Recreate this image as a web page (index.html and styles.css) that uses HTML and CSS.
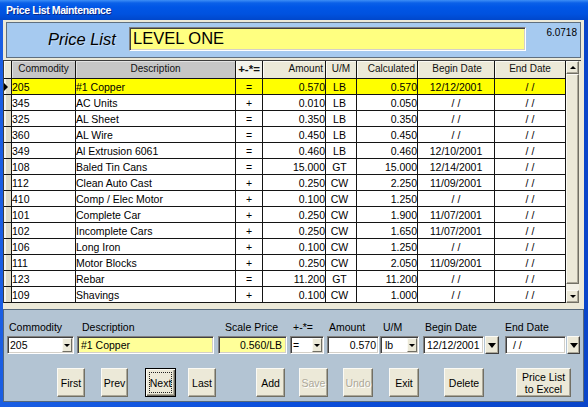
FILE: index.html
```html
<!DOCTYPE html>
<html>
<head>
<meta charset="utf-8">
<title>Price List Maintenance</title>
<link rel="stylesheet" href="styles.css">
</head>
<body>
<div class="window">
  <div class="titlebar">Price List Maintenance</div>
  <div class="client">
    <div class="list-panel">
      <span class="list-label">Price List</span>
      <div class="list-input">LEVEL ONE</div>
      <span class="version">6.0718</span>
    </div>

    <div class="grid">
      <div class="grid-body">
        <div class="row row-head">
          <div class="c c-sel"></div>
          <div class="c c-com h-gray">Commodity</div>
          <div class="c c-desc h-gray">Description</div>
          <div class="c c-sign h-sign">+-*=</div>
          <div class="c c-amt">Amount</div>
          <div class="c c-um">U/M</div>
          <div class="c c-calc">Calculated</div>
          <div class="c c-beg">Begin Date</div>
          <div class="c c-end">End Date</div>
        </div>
        <div class="row row-current">
          <div class="c c-sel"><span class="pointer"></span></div>
          <div class="c c-com">205</div><div class="c c-desc">#1 Copper</div><div class="c c-sign">=</div><div class="c c-amt">0.570</div><div class="c c-um">LB</div><div class="c c-calc">0.570</div><div class="c c-beg">12/12/2001</div><div class="c c-end">/ /</div>
        </div>
        <div class="row">
          <div class="c c-sel"></div>
          <div class="c c-com">345</div><div class="c c-desc">AC Units</div><div class="c c-sign">+</div><div class="c c-amt">0.010</div><div class="c c-um">LB</div><div class="c c-calc">0.050</div><div class="c c-beg">/ /</div><div class="c c-end">/ /</div>
        </div>
        <div class="row">
          <div class="c c-sel"></div>
          <div class="c c-com">325</div><div class="c c-desc">AL Sheet</div><div class="c c-sign">=</div><div class="c c-amt">0.350</div><div class="c c-um">LB</div><div class="c c-calc">0.350</div><div class="c c-beg">/ /</div><div class="c c-end">/ /</div>
        </div>
        <div class="row">
          <div class="c c-sel"></div>
          <div class="c c-com">360</div><div class="c c-desc">AL Wire</div><div class="c c-sign">=</div><div class="c c-amt">0.450</div><div class="c c-um">LB</div><div class="c c-calc">0.450</div><div class="c c-beg">/ /</div><div class="c c-end">/ /</div>
        </div>
        <div class="row">
          <div class="c c-sel"></div>
          <div class="c c-com">349</div><div class="c c-desc">Al Extrusion 6061</div><div class="c c-sign">=</div><div class="c c-amt">0.460</div><div class="c c-um">LB</div><div class="c c-calc">0.460</div><div class="c c-beg">12/10/2001</div><div class="c c-end">/ /</div>
        </div>
        <div class="row">
          <div class="c c-sel"></div>
          <div class="c c-com">108</div><div class="c c-desc">Baled Tin Cans</div><div class="c c-sign">=</div><div class="c c-amt">15.000</div><div class="c c-um">GT</div><div class="c c-calc">15.000</div><div class="c c-beg">12/14/2001</div><div class="c c-end">/ /</div>
        </div>
        <div class="row">
          <div class="c c-sel"></div>
          <div class="c c-com">112</div><div class="c c-desc">Clean Auto Cast</div><div class="c c-sign">+</div><div class="c c-amt">0.250</div><div class="c c-um">CW</div><div class="c c-calc">2.250</div><div class="c c-beg">11/09/2001</div><div class="c c-end">/ /</div>
        </div>
        <div class="row">
          <div class="c c-sel"></div>
          <div class="c c-com">410</div><div class="c c-desc">Comp / Elec Motor</div><div class="c c-sign">+</div><div class="c c-amt">0.100</div><div class="c c-um">CW</div><div class="c c-calc">1.250</div><div class="c c-beg">/ /</div><div class="c c-end">/ /</div>
        </div>
        <div class="row">
          <div class="c c-sel"></div>
          <div class="c c-com">101</div><div class="c c-desc">Complete Car</div><div class="c c-sign">+</div><div class="c c-amt">0.250</div><div class="c c-um">CW</div><div class="c c-calc">1.900</div><div class="c c-beg">11/07/2001</div><div class="c c-end">/ /</div>
        </div>
        <div class="row">
          <div class="c c-sel"></div>
          <div class="c c-com">102</div><div class="c c-desc">Incomplete Cars</div><div class="c c-sign">+</div><div class="c c-amt">0.250</div><div class="c c-um">CW</div><div class="c c-calc">1.650</div><div class="c c-beg">11/07/2001</div><div class="c c-end">/ /</div>
        </div>
        <div class="row">
          <div class="c c-sel"></div>
          <div class="c c-com">106</div><div class="c c-desc">Long Iron</div><div class="c c-sign">+</div><div class="c c-amt">0.100</div><div class="c c-um">CW</div><div class="c c-calc">1.250</div><div class="c c-beg">/ /</div><div class="c c-end">/ /</div>
        </div>
        <div class="row">
          <div class="c c-sel"></div>
          <div class="c c-com">111</div><div class="c c-desc">Motor Blocks</div><div class="c c-sign">+</div><div class="c c-amt">0.250</div><div class="c c-um">CW</div><div class="c c-calc">2.050</div><div class="c c-beg">11/09/2001</div><div class="c c-end">/ /</div>
        </div>
        <div class="row">
          <div class="c c-sel"></div>
          <div class="c c-com">123</div><div class="c c-desc">Rebar</div><div class="c c-sign">=</div><div class="c c-amt">11.200</div><div class="c c-um">GT</div><div class="c c-calc">11.200</div><div class="c c-beg">/ /</div><div class="c c-end">/ /</div>
        </div>
        <div class="row">
          <div class="c c-sel"></div>
          <div class="c c-com">109</div><div class="c c-desc">Shavings</div><div class="c c-sign">+</div><div class="c c-amt">0.100</div><div class="c c-um">CW</div><div class="c c-calc">1.000</div><div class="c c-beg">/ /</div><div class="c c-end">/ /</div>
        </div>
      </div>
      <div class="vscroll">
        <div class="sb-btn"><span class="tri-up"></span></div>
        <div class="sb-thumb"></div>
        <div class="sb-track"></div>
        <div class="sb-btn"><span class="tri-down"></span></div>
      </div>
    </div>

    <div class="edit-panel">
      <div class="fields">
        <div class="field f-com">
          <div class="lbl">Commodity</div>
          <div class="ctl combo"><span class="val">205</span><span class="dd"><span class="tri-down"></span></span></div>
        </div>
        <div class="field f-desc">
          <div class="lbl">Description</div>
          <div class="ctl yellow"><span class="val">#1 Copper</span></div>
        </div>
        <div class="field f-scale">
          <div class="lbl">Scale Price</div>
          <div class="ctl yellow right"><span class="val">0.560/LB</span></div>
        </div>
        <div class="field f-sign">
          <div class="lbl">+-*=</div>
          <div class="ctl combo"><span class="val">=</span><span class="dd"><span class="tri-down"></span></span></div>
        </div>
        <div class="field f-amt">
          <div class="lbl">Amount</div>
          <div class="ctl right"><span class="val">0.570</span></div>
        </div>
        <div class="field f-um">
          <div class="lbl">U/M</div>
          <div class="ctl combo"><span class="val">lb</span><span class="dd"><span class="tri-down"></span></span></div>
        </div>
        <div class="field f-beg">
          <div class="lbl">Begin Date</div>
          <div class="date-row">
            <div class="ctl date"><span class="val">12/12/2001</span></div>
            <div class="date-btn"><span class="tri-big"></span></div>
          </div>
        </div>
        <div class="field f-end">
          <div class="lbl">End Date</div>
          <div class="date-row">
            <div class="ctl date"><span class="val">&nbsp;/ /</span></div>
            <div class="date-btn narrow"><span class="tri-big"></span></div>
          </div>
        </div>
      </div>
      <div class="buttons">
        <div class="btn b-first">First</div>
        <div class="btn b-prev">Prev</div>
        <div class="btn b-next"><span class="focus">Next</span></div>
        <div class="btn b-last">Last</div>
        <div class="btn b-add">Add</div>
        <div class="btn b-save disabled">Save</div>
        <div class="btn b-undo disabled">Undo</div>
        <div class="btn b-exit">Exit</div>
        <div class="btn b-delete">Delete</div>
        <div class="btn b-excel">Price List<br>to Excel</div>
      </div>
    </div>
  </div>
</div>
</body>
</html>
```

FILE: styles.css
```css
* { box-sizing: border-box; }
html, body { margin: 0; padding: 0; }
body {
  width: 588px;
  height: 407px;
  overflow: hidden;
  font-family: "Liberation Sans", Arial, sans-serif;
  font-size: 10.5px;
  color: #000;
  background: #0b4edb;
}

.window {
  width: 588px;
  height: 407px;
  display: flex;
  flex-direction: column;
  background: linear-gradient(to right, #1a5ee3, #0b4edb 50%, #0a45c9);
}

.titlebar {
  height: 20px;
  flex: none;
  padding-left: 6px;
  color: #fff;
  font-weight: bold;
  font-size: 10.5px;
  letter-spacing: -0.4px;
  line-height: 20px;
  background: linear-gradient(#3d8ef6 0, #0a60e8 3px, #0056e6 7px, #0052df 14px, #0047cb 20px);
  text-shadow: 1px 1px 0 #0a2a8a;
}

.client {
  flex: 1;
  margin: 0 4px 5px 3px;
  background: #ece9d8;
  display: flex;
  flex-direction: column;
}

/* ---- top panel ---- */
.list-panel {
  flex: none;
  height: 36px;
  margin: 2px 3px 0 3px;
  background: #a6caf0;
  border: 1px solid #5f6f7f;
  display: flex;
  align-items: center;
  padding-left: 41px;
  padding-right: 3px;
}
.list-label {
  font-size: 16.5px;
  font-style: italic;
  line-height: 20px;
  width: 70px;
  margin-right: 11px;
  margin-bottom: 2px;
  text-shadow: 1px 1px 0 rgba(255,255,255,0.35);
}
.list-input {
  width: 397px;
  height: 24px;
  margin-bottom: 2px;
  background: #ffff80;
  border: 1px solid;
  border-color: #808080 #fff #fff #808080;
  box-shadow: inset 1px 1px 0 #404040, inset -1px -1px 0 #d4d0c8;
  font-size: 16.5px;
  line-height: 21px;
  padding-left: 3px;
}
.version {
  margin-left: auto;
  align-self: flex-start;
  margin-top: 4px;
  font-size: 10px;
  line-height: 12px;
}

/* ---- grid ---- */
.grid {
  flex: none;
  height: 246px;
  margin: 2px 3px 0 0;
  border-top: 1px solid #3c3c3c;
  display: flex;
  align-items: flex-start;
}
.grid-body {
  border-left: 1px solid #3c3c3c;
}
.row {
  display: flex;
  height: 16px;
}
.c {
  height: 100%;
  border-right: 1px solid #141414;
  border-bottom: 1px solid #141414;
  background: #fff;
  white-space: nowrap;
  overflow: hidden;
  padding-top: 1px;
  line-height: 14px;
}
.c-sel  { width: 8px; background: linear-gradient(to right, #f6f5ee 0 2px, #e0dcc8 2px); }
.c-com  { width: 64px; }
.c-desc { width: 160px; }
.c-sign { width: 27px; text-align: center; }
.c-amt  { width: 63px; text-align: right; }
.c-um   { width: 31px; text-align: center; padding-right: 3px; }
.c-calc { width: 61px; text-align: right; }
.c-beg  { width: 77px; text-align: center; }
.c-end  { width: 71px; text-align: center; }

.row-current .c { background: #ffff00; }
.row-current .c-sel {
  background: linear-gradient(to right, #f6f5ee 0 2px, #e0dcc8 2px);
  padding-top: 4px;
}
.pointer {
  display: block;
  width: 0;
  height: 0;
  border-left: 4px solid #000;
  border-top: 4px solid transparent;
  border-bottom: 4px solid transparent;
}

.row-head { height: 18px; }
.row-head .c {
  background: #ece9d8;
  font-size: 10px;
  line-height: 16px;
  padding-top: 0;
  color: #111;
  box-shadow: inset 1px 1px 0 #fbfaf4;
}
.row-head .c-sel { background: #ece9d8; }
.row-head .h-gray {
  background: #c6c6c6;
  box-shadow: inset 1px 1px 0 #e2e2e2;
  text-align: center;
}
.row-head .h-sign { font-weight: bold; font-size: 11.5px; background: #f3f2ea; }
.row-head .c-amt, .row-head .c-calc { padding-right: 2px; }
.row-head .c-um { padding-right: 0; }
.row-head .c-beg { padding-left: 2px; }

.vscroll {
  width: 13px;
  height: 242px;
  display: flex;
  flex-direction: column;
  background: #f3f1e6;
}
.sb-btn, .sb-thumb {
  flex: none;
  background: #ece9d8;
  border: 1px solid;
  border-color: #fbfaf4 #716f64 #716f64 #fbfaf4;
  box-shadow: inset -1px -1px 0 #aca899;
}
.sb-btn {
  height: 13px;
  display: flex;
  align-items: center;
  justify-content: center;
}
.sb-thumb { height: 210px; }
.sb-track { flex: 1; }

.tri-up, .tri-down {
  width: 0;
  height: 0;
  border-left: 3px solid transparent;
  border-right: 3px solid transparent;
}
.tri-up { border-bottom: 3px solid #000; }
.tri-down { border-top: 3px solid #000; }
.tri-big {
  width: 0;
  height: 0;
  border-left: 4px solid transparent;
  border-right: 4px solid transparent;
  border-top: 5px solid #000;
}

/* ---- edit panel ---- */
.edit-panel {
  flex: 1;
  margin-top: 3px;
  background: #b3c4d3;
  border: 1px solid #56687a;
  padding-top: 11px;
}
.fields {
  display: flex;
  align-items: flex-start;
}
.field { display: flex; flex-direction: column; }
.lbl {
  line-height: 13px;
  height: 13px;
  margin-bottom: 2px;
  white-space: nowrap;
}
.ctl {
  height: 18px;
  background: #fff;
  border: 1px solid;
  border-color: #808080 #fff #fff #808080;
  box-shadow: inset 1px 1px 0 #404040, inset -1px -1px 0 #d4d0c8;
  display: flex;
  align-items: center;
  padding: 0 2px 0 2px;
  white-space: nowrap;
  overflow: hidden;
}
.ctl .val { flex: 1; }
.ctl.yellow { background: #ffff99; }
.ctl.right .val { text-align: right; }
.combo { padding-right: 1px; }
.dd {
  flex: none;
  width: 10px;
  height: 14px;
  background: #ece9d8;
  border: 1px solid;
  border-color: #fbfaf4 #716f64 #716f64 #fbfaf4;
  display: flex;
  align-items: center;
  justify-content: center;
}

.f-com   { margin-left: 3px; width: 67px; }
.f-com .lbl { padding-left: 2px; }
.f-com .val { padding-left: 0; }
.f-desc  { margin-left: 3px; width: 137px; }
.f-desc .lbl { padding-left: 5px; }
.f-desc .val { padding-left: 1px; }
.f-scale { margin-left: 4px; width: 69px; }
.f-scale .lbl { padding-left: 7px; }
.f-scale .ctl { padding-right: 4px; }
.f-sign  { margin-left: 3px; width: 34px; }
.f-sign .lbl { padding-left: 3px; }
.f-amt   { margin-left: 3px; width: 52px; }
.f-amt .lbl { padding-left: 2px; }
.f-amt .ctl { padding-right: 2px; }
.f-um    { margin-left: 1px; width: 39px; }
.f-um .lbl { padding-left: 3px; }
.f-um .val { padding-left: 2px; }
.f-beg   { margin-left: 4px; }
.f-beg .lbl { padding-left: 2px; }
.f-end   { margin-left: 6px; }

.date-row { display: flex; gap: 1px; }
.ctl.date { width: 61px; }
.f-beg .val { padding-left: 1px; }
.f-end .val { padding-left: 2px; }
.date-btn {
  width: 14px;
  height: 18px;
  background: #ece9d8;
  border: 1px solid;
  border-color: #fbfaf4 #404040 #404040 #fbfaf4;
  box-shadow: inset -1px -1px 0 #aca899;
  display: flex;
  align-items: center;
  justify-content: center;
}
.date-btn.narrow { width: 13px; }

.buttons {
  display: flex;
  margin-top: 14px;
  height: 29px;
}
.btn {
  height: 29px;
  background: #ece9d8;
  border: 1px solid;
  border-color: #fbfaf4 #716f64 #716f64 #fbfaf4;
  box-shadow: inset -1px -1px 0 #aca899;
  display: flex;
  align-items: center;
  justify-content: center;
  text-align: center;
  line-height: 12px;
  white-space: nowrap;
}
.btn.disabled { color: #aca899; text-shadow: 1px 1px 0 #fff; }
.b-first  { margin-left: 53px; width: 28px; }
.b-prev   { margin-left: 16px; width: 27px; }
.b-next {
  margin-left: 17px;
  width: 31px;
  border: 1px solid #000;
  box-shadow: inset 1px 1px 0 #fbfaf4, inset -1px -1px 0 #716f64, inset -2px -2px 0 #aca899;
  padding: 3px;
}
.b-next .focus {
  flex: 1;
  align-self: stretch;
  border: 1px dotted #222;
  display: flex;
  align-items: center;
  justify-content: center;
}
.b-last   { margin-left: 12px; width: 28px; }
.b-add    { margin-left: 40px; width: 29px; }
.b-save   { margin-left: 14px; width: 29px; }
.b-undo   { margin-left: 15px; width: 30px; }
.b-exit   { margin-left: 16px; width: 30px; }
.b-delete { margin-left: 25px; width: 40px; }
.b-excel  { margin-left: 32px; width: 55px; }
```
